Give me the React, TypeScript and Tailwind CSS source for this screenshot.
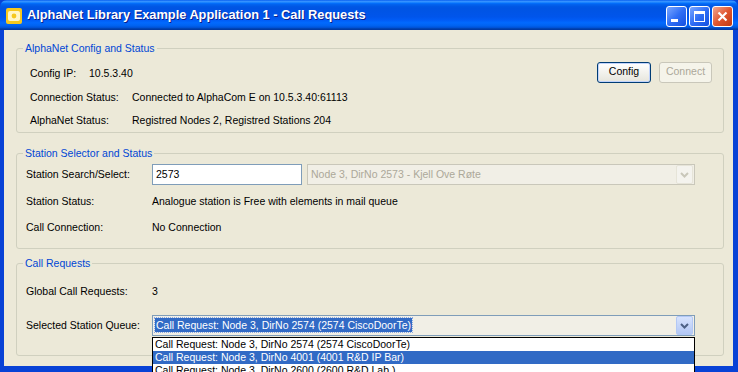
import React from "react";

const font = { fontFamily: '"Liberation Sans", Arial, sans-serif' };

function Legend(properties: { children: React.ReactNode }) {
  return (
    <legend className="ml-[6px] px-[2px] leading-[13px] text-[#0046d5]">
      {properties.children}
    </legend>
  );
}

function Row(properties: {
  label: string;
  value?: string;
  valueX: number;
  className?: string;
  children?: React.ReactNode;
}) {
  return (
    <div className={"flex items-center " + (properties.className ?? "")}>
      <span className="shrink-0" style={{ width: properties.valueX }}>
        {properties.label}
      </span>
      {properties.value !== undefined && <span>{properties.value}</span>}
      {properties.children}
    </div>
  );
}

function ComboButton(properties: { disabled?: boolean }) {
  const stroke = properties.disabled ? "#c9c7ba" : "#4d6185";
  return (
    <div
      className={
        "w-[17px] h-[19px] rounded-[2px] border flex items-center justify-center " +
        (properties.disabled
          ? "border-[#e6e4d8] bg-[#f4f3ee]"
          : "border-[#b3c8f5] bg-gradient-to-b from-[#d7e3fd] to-[#b2c7f5]")
      }
    >
      <svg width="9" height="6" viewBox="0 0 9 6">
        <path d="M1 1 L4.5 4.5 L8 1" fill="none" stroke={stroke} strokeWidth="2" />
      </svg>
    </div>
  );
}

function TitleButton(properties: { kind: "min" | "max" | "close" }) {
  const close = properties.kind === "close";
  return (
    <div
      className={
        "w-[21px] h-[21px] rounded-[3px] border border-white flex items-center justify-center " +
        (close
          ? "bg-gradient-to-br from-[#f0a58f] via-[#e0562f] to-[#c03a12]"
          : "bg-gradient-to-br from-[#7aa6ff] via-[#2f6ef5] to-[#1450e0]")
      }
    >
      {properties.kind === "min" && (
        <div className="w-[7px] h-[3px] bg-white mt-[9px] mr-[5px]" />
      )}
      {properties.kind === "max" && (
        <div className="w-[11px] h-[11px] border border-white border-t-[3px]" />
      )}
      {close && (
        <svg width="11" height="11" viewBox="0 0 11 11">
          <path d="M1.5 1.5 L9.5 9.5 M9.5 1.5 L1.5 9.5" stroke="white" strokeWidth="2.2" />
        </svg>
      )}
    </div>
  );
}

export default function App() {
  return (
    <div
      className="w-[738px] h-[372px] overflow-hidden flex flex-col bg-[#0842d6] text-[10.5px] text-black"
      style={font}
    >
      <header className="h-[30px] shrink-0 flex items-center pl-[6px] pr-[5px] rounded-t-[7px] bg-[linear-gradient(to_bottom,#0058ee_0%,#3a93ff_4%,#288eff_7%,#036ffc_11%,#0262ee_15%,#0057e5_22%,#0054e3_28%,#0055eb_56%,#005bf5_66%,#026afe_76%,#0062ef_86%,#0052d6_92%,#0040ab_96%,#0035a0_100%)]">
        <svg width="16" height="16" viewBox="0 0 16 16" className="mt-[2px]">
          <rect x="0" y="0" width="16" height="16" rx="2" fill="#f6c81e" />
          <rect x="2" y="3" width="12" height="10" rx="2" fill="#fff6c8" />
          <circle cx="8" cy="8" r="2.4" fill="#f6c81e" />
        </svg>
        <h1 className="ml-[5px] text-white font-bold text-[12.8px] [text-shadow:1px_1px_0_#0a1f8a]">
          AlphaNet Library Example Application 1 - Call Requests
        </h1>
        <div className="ml-auto flex gap-[2px] mt-[2px]">
          <TitleButton kind="min" />
          <TitleButton kind="max" />
          <TitleButton kind="close" />
        </div>
      </header>

      <main className="ml-[4px] mr-[5px] h-[336px] shrink-0 bg-[#ece9d8] flex flex-col relative">
        <fieldset className="mt-[12px] ml-[12px] mr-[9px] h-[91px] border border-[#d0d0bf] rounded-[3px]">
          <Legend>AlphaNet Config and Status</Legend>
          <div className="pl-[13px] pr-[11px] pt-[11px] flex flex-col">
            <Row label="Config IP:" value="10.5.3.40" valueX={59} className="h-[16px]">
              <div className="ml-auto flex gap-[8px] mb-[4px]">
                <button className="w-[54px] h-[21px] rounded-[3px] border border-[#003c74] bg-gradient-to-b from-white to-[#e6e5dc] shadow-[inset_0_0_0_1px_#c1d3fb] text-black">
                  Config
                </button>
                <button className="w-[53px] h-[21px] rounded-[3px] border border-[#c9c7ba] bg-[#f5f4ea] text-[#aca899]">
                  Connect
                </button>
              </div>
            </Row>
            <Row
              label="Connection Status:"
              value="Connected to AlphaCom E on 10.5.3.40:61113"
              valueX={102}
              className="h-[16px] mt-[8px]"
            />
            <Row
              label="AlphaNet Status:"
              value="Registred Nodes 2, Registred Stations 204"
              valueX={102}
              className="h-[16px] mt-[7px]"
            />
          </div>
        </fieldset>

        <fieldset className="mt-[14px] ml-[12px] mr-[9px] h-[102px] border border-[#d0d0bf] rounded-[3px]">
          <Legend>Station Selector and Status</Legend>
          <div className="pl-[9px] pt-[4px] flex flex-col">
            <Row label="Station Search/Select:" valueX={126} className="h-[21px]">
              <div className="w-[150px] h-[21px] border border-[#7f9db9] bg-white pl-[3px] flex items-center">
                2573
              </div>
              <div className="ml-[5px] w-[388px] h-[21px] border border-[#c9c7ba] bg-[#f1efe6] flex items-center pl-[3px] pr-px text-[#aca899]">
                <span className="flex-1">Node 3, DirNo 2573 - Kjell Ove Røte</span>
                <ComboButton disabled />
              </div>
            </Row>
            <Row
              label="Station Status:"
              value="Analogue station is Free with elements in mail queue"
              valueX={126}
              className="h-[16px] mt-[9px]"
            />
            <Row
              label="Call Connection:"
              value="No Connection"
              valueX={126}
              className="h-[16px] mt-[10px]"
            />
          </div>
        </fieldset>

        <fieldset className="mt-[8px] ml-[12px] mr-[9px] h-[99px] border border-[#d0d0bf] rounded-[3px]">
          <Legend>Call Requests</Legend>
          <div className="pl-[9px] pt-[14px] flex flex-col">
            <Row label="Global Call Requests:" value="3" valueX={126} className="h-[16px]" />
            <Row label="Selected Station Queue:" valueX={126} className="h-[21px] mt-[15px]">
              <div className="relative w-[543px] h-[21px] border border-[#7f9db9] bg-[#f1efe6] flex items-center pl-[2px] pr-px">
                <span className="flex-1">
                  <span className="bg-[#316ac5] text-white px-px py-px outline-1 outline-dotted outline-[#8aa8e0]">
                    Call Request: Node 3, DirNo 2574 (2574 CiscoDoorTe)
                  </span>
                </span>
                <ComboButton />
                <ul className="absolute left-[-1px] top-[21px] w-[543px] border border-black bg-white leading-[13px] z-10">
                  <li className="pl-[2px]">Call Request: Node 3, DirNo 2574 (2574 CiscoDoorTe)</li>
                  <li className="pl-[2px] bg-[#316ac5] text-white">
                    Call Request: Node 3, DirNo 4001 (4001 R&amp;D IP Bar)
                  </li>
                  <li className="pl-[2px]">Call Request: Node 3, DirNo 2600 (2600 R&amp;D Lab )</li>
                </ul>
              </div>
            </Row>
          </div>
        </fieldset>
      </main>
    </div>
  );
}
